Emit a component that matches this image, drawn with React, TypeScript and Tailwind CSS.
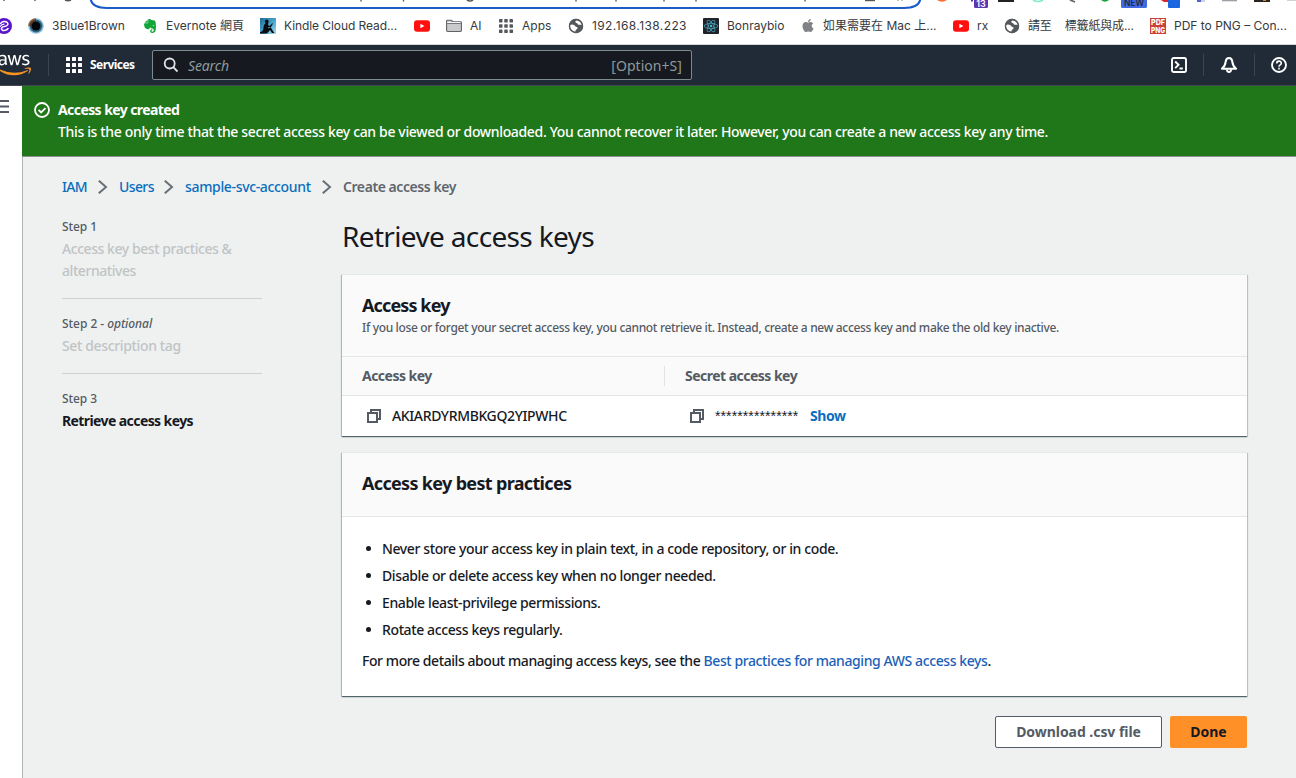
import type { ReactNode } from "react";
import { FaApple, FaAws, FaEvernote, FaReact } from "react-icons/fa";

function TopStrip() {
  return (
    <svg width="1296" height="10" viewBox="0 0 1296 10" className="block shrink-0" fontFamily="Inter, sans-serif">
      <path d="M90.5 -2 C91 4.5 97 8 107 8 H904 C914 8 920 4.5 920.5 -2" fill="none" stroke="#1a5bc8" strokeWidth="2" />
      <path d="M4 0v1M35 0v1" stroke="#555" strokeWidth="1.4" />
      <path d="M65 0q3 1.4 6 0" stroke="#555" strokeWidth="1.4" fill="none" />
      <path d="M361 0v1.4M403.500 0v1.4M576 0v1.4M616 0v1.4M664 0v1.4M696 0v1.4M805 0v1.4" stroke="#555" strokeWidth="1.3" />
      <path d="M467 0q3 2 6 0" stroke="#555" strokeWidth="1.6" fill="none" />
      <path d="M865 0.500h10" stroke="#555" strokeWidth="1.4" />
      <path d="M898 0v1M902 0v1" stroke="#888" strokeWidth="1" />
      <path d="M937 0q5 3.600 10 0z" fill="#ff6b2c" />
      <rect x="974" y="-4" width="14" height="12" rx="1.500" fill="#5e35b1" />
      <text x="981" y="6.500" fontSize="9" fontWeight="600" fill="#fff" textAnchor="middle">13</text>
      <rect x="971" y="0" width="2" height="1.500" fill="#5e35b1" />
      <rect x="998" y="0" width="16" height="2" fill="#222" />
      <path d="M1033 0q5 3 10 0" fill="none" stroke="#7eead0" strokeWidth="1.500" />
      <path d="M1070 0l5 2" stroke="#666" strokeWidth="1.800" />
      <path d="M1101 0q4 3.600 8 0z" fill="#13a53b" />
      <rect x="1121" y="-4" width="26" height="12" rx="1.500" fill="#4169e1" />
      <text x="1134" y="6.300" fontSize="8.500" fontWeight="500" fill="#1b2233" textAnchor="middle">NEW</text>
      <path d="M1161 0h7v2h-4z" fill="#e0202a" />
      <rect x="1168" y="-4" width="12" height="12" rx="1" fill="#1a66e0" />
      <rect x="1197" y="0" width="4" height="2" fill="#5560c8" />
      <rect x="1201" y="0" width="4" height="2" fill="#cfd3e6" />
      <rect x="1222" y="0" width="15" height="1.300" fill="#9aa0a6" />
      <rect x="1254" y="0" width="16" height="2" fill="#2a2320" />
      <rect x="1263" y="0" width="3" height="1" fill="#d48a2a" />
      <rect x="1287" y="0" width="9" height="1" fill="#d9cfd2" />
    </svg>
  );
}

function YouTube() {
  return (
    <svg width="16" height="16" viewBox="0 0 16 16">
      <rect x="0" y="2.200" width="16" height="11.600" rx="3" fill="#ff0f0f" />
      <path d="M6.400 5.700v4.600l4-2.300z" fill="#fff" />
    </svg>
  );
}

function Violet() {
  return (
    <svg width="16" height="16" viewBox="0 0 16 16">
      <circle cx="8" cy="8" r="8" fill="#5b16c9" />
      <path d="M4.500 5.500C6 3.300 9.500 2.700 11.300 4.600c1.300 1.600.2 3-1.500 3.500L7 8.900c-1.600.6-2 2-1 2.900 1.500 1.200 4.500.8 6-1.300" fill="none" stroke="#fff" strokeWidth="1.500" strokeLinecap="round" />
      <path d="M4.500 8.300Q5.500 6.300 8 6.200" fill="none" stroke="#fff" strokeWidth="1.200" strokeLinecap="round" />
    </svg>
  );
}

function Eye() {
  return (
    <svg width="16" height="16" viewBox="0 0 16 16">
      <circle cx="8" cy="8" r="7.800" fill="#8fc3dd" />
      <path d="M8 .2A7.800 7.800 0 0 0 .2 8H8z" fill="#9a6038" />
      <circle cx="8" cy="8" r="6.400" fill="#2d6482" />
      <path d="M8 1.600A6.400 6.400 0 0 0 1.600 8H8z" fill="#5c3a25" />
      <circle cx="8" cy="8" r="4.500" fill="#03060a" />
    </svg>
  );
}

function Kindle() {
  return (
    <svg width="16" height="16" viewBox="0 0 16 16">
      <defs>
        <linearGradient id="sky" x1="0" y1="0" x2="1" y2="1">
          <stop offset="0" stopColor="#1d6d96" />
          <stop offset=".55" stopColor="#49a8cf" />
          <stop offset="1" stopColor="#a6dcec" />
        </linearGradient>
      </defs>
      <rect width="16" height="16" fill="url(#sky)" />
      <path d="M0 14.300C2 13.500 3 12.500 3.400 11 3.300 8.500 4 6.300 5.700 5A1.900 1.900 0 1 1 8.300 4.600L8 7l1.800 1 2.400-2.700.7.500-2.200 3.700-2.200-.4L8 10.300l3-.6 2.600 4.400 1 .9H12l-2-2.900L7 15.500H0z" fill="#090d10" />
    </svg>
  );
}

function Folder() {
  return (
    <svg width="16" height="16" viewBox="0 0 16 16">
      <path d="M.6 12.600V3.200q0-.9.9-.9h4l1.300 1.500h7.700q.9 0 .9.900v7.900q0 .9-.9.900H1.500q-.9 0-.9-.9z" fill="#c9cacc" stroke="#5f6368" strokeWidth="1.100" />
      <path d="M1.200 5.400h13.600" stroke="#5f6368" strokeWidth=".9" />
      <path d="M1.200 4.500h13.300" stroke="#fff" strokeWidth=".9" />
    </svg>
  );
}

function Grid({ size, color }: { size: number; color: string }) {
  return (
    <svg width={size} height={size} viewBox="0 0 16 16" fill={color}>
      {[0, 6, 12].map((y) => [0, 6, 12].map((x) => <rect key={`${x}-${y}`} x={x} y={y} width="4" height="4" rx=".5" />))}
    </svg>
  );
}

function Globe() {
  return (
    <svg width="16" height="16" viewBox="0 0 16 16">
      <circle cx="8" cy="8" r="7.200" fill="#54585d" />
      <path d="M1.300 7.400C4 5.800 6.300 6.700 7.300 8.200c.5 1 2.200.4 2.300 1.800 0 1.500-1.700 1.200-2 2.600l-.4 1.300C3.800 13.600 1.500 10.800 1.300 7.400z" fill="#fff" />
      <path d="M8.600 2.200c-1.800 1-1.500 2.400-.2 2.700 1.300.2 1 1.500 2.200 1.900 1.300.3 1.800-.5 3.300.6C14 5 11.600 2.300 8.600 2.200z" fill="#fff" />
      <circle cx="8" cy="8" r="6.500" fill="none" stroke="#54585d" strokeWidth="1.400" />
    </svg>
  );
}

function PdfIcon() {
  return (
    <svg width="16" height="16" viewBox="0 0 16 16" fontFamily="Inter, sans-serif" fontWeight="800" fontSize="8" fill="#fff">
      <rect width="16" height="16" fill="#cc4036" />
      <text x="1" y="7.300" textLength="14" lengthAdjust="spacingAndGlyphs">PDF</text>
      <text x="1" y="14.600" textLength="14" lengthAdjust="spacingAndGlyphs">PNG</text>
    </svg>
  );
}

function Bookmark({ icon, children, className }: { icon: ReactNode; children?: ReactNode; className: string }) {
  return (
    <div className={`flex shrink-0 items-center gap-2 whitespace-pre ${className}`}>
      <span className="flex w-4 shrink-0 justify-center">{icon}</span>
      {children}
    </div>
  );
}

function Bookmarks() {
  return (
    <div className="flex h-[35px] shrink-0 items-center border-b border-[#d5d7da] bg-white pb-[2px] font-[Inter,'Noto_Sans_CJK_TC',sans-serif] text-[12px] text-[#36393d]">
      <Bookmark className="-ml-1 w-8" icon={<Violet />} />
      <Bookmark className="w-[114px]" icon={<Eye />}>3Blue1Brown</Bookmark>
      <Bookmark className="w-[118px]" icon={<FaEvernote size={16} color="#12a537" />}>Evernote 網頁</Bookmark>
      <Bookmark className="w-[154px] tracking-[-0.08px]" icon={<Kindle />}>Kindle Cloud Read...</Bookmark>
      <Bookmark className="w-8" icon={<YouTube />} />
      <Bookmark className="w-[52px]" icon={<Folder />}>AI</Bookmark>
      <Bookmark className="w-[70px]" icon={<Grid size={14} color="#54585d" />}>Apps</Bookmark>
      <Bookmark className="w-[135px] tracking-[0.4px]" icon={<Globe />}>192.168.138.223</Bookmark>
      <Bookmark className="w-24" icon={<span className="flex size-4 items-center justify-center rounded-[1px] bg-[#20232a]"><FaReact size={14} color="#4bb5d2" /></span>}>Bonraybio</Bookmark>
      <Bookmark className="w-[154px]" icon={<FaApple size={15} color="#808285" className="mb-px ml-[2px]" />}>如果需要在 Mac 上...</Bookmark>
      <Bookmark className="w-[51px]" icon={<YouTube />}>rx</Bookmark>
      <Bookmark className="w-[146px] tracking-[-0.14px]" icon={<Globe />}>請至    標籤紙與成...</Bookmark>
      <Bookmark className="w-[146px]" icon={<PdfIcon />}>PDF to PNG – Con...</Bookmark>
    </div>
  );
}

function Header() {
  return (
    <header className="flex h-[41px] shrink-0 items-center border-b border-[#414750] bg-[#212b37] text-white">
      <svg width="0" height="0" className="size-0">
        <defs>
          <linearGradient id="awsFill" x1="0" y1="0" x2="0" y2="1">
            <stop offset=".6" stopColor="#fff" />
            <stop offset=".6" stopColor="#f7931e" />
          </linearGradient>
        </defs>
      </svg>
      <FaAws fill="url(#awsFill)" className="-ml-[3px] h-[28px] w-[34px] shrink-0" />
      <span className="ml-[17px] h-[22px] w-px bg-[#3b4552]" />
      <div className="ml-[17px] flex w-[86px] items-center gap-2">
        <Grid size={16} color="#fff" />
        <span className="text-[12px] font-bold tracking-[-0.55px]">Services</span>
      </div>
      <div className="flex h-[30px] w-[540px] items-center rounded-[2px] border border-[#7c8c8d] bg-[#16191f] pr-[9px] pl-[10px] text-[14px] text-[#8d9b9c]">
        <svg width="16" height="16" viewBox="0 0 16 16" fill="none" stroke="#dfe3e6" strokeWidth="1.800">
          <circle cx="6.700" cy="6.500" r="5" />
          <path d="M10.300 10.200l4.200 4.300" />
        </svg>
        <span className="ml-[9px] tracking-[-0.15px] italic">Search</span>
        <span className="ml-auto tracking-[0.05px]">[Option+S]</span>
      </div>
      <div className="ml-[479px] flex shrink-0 items-center">
        <svg width="16" height="16" viewBox="0 0 16 16" fill="none" stroke="#fff" strokeWidth="1.900">
          <rect x="1" y="1" width="14" height="14" rx="1.800" />
          <path d="M4.200 4.500L7.500 7.800 4.200 11.200M8.500 11.500h3.300" />
        </svg>
        <span className="ml-4 h-[22px] w-px bg-[#3b4552]" />
        <svg width="18" height="18" viewBox="0 0 18 18" className="ml-4" fill="none" stroke="#fff" strokeWidth="2" strokeLinejoin="round">
          <path d="M9 2C7 2 5.900 3.400 5.700 5.600 5.400 9 4 11 1.900 12.700h14.200C14 11 12.600 9 12.300 5.600 12.100 3.400 11 2 9 2z" />
          <path d="M6.900 13.500c.2 3.400 4 3.400 4.200 0" />
        </svg>
        <span className="ml-4 h-[22px] w-px bg-[#3b4552]" />
        <svg width="16" height="16" viewBox="0 0 16 16" className="ml-4" fill="none" stroke="#fff" strokeWidth="1.900">
          <circle cx="8" cy="8" r="7" />
          <path d="M5.700 6.500C5.700 3.400 10.300 3.400 10.300 6.200 10.300 8 8 7.700 8 9.700M8 10.700v1.700" strokeWidth="1.600" />
        </svg>
      </div>
    </header>
  );
}

function Chevron() {
  return (
    <svg width="10" height="14" viewBox="0 0 10 14" fill="none" stroke="#687078" strokeWidth="2">
      <path d="M.8 .7L8 7l-7.200 6.300" />
    </svg>
  );
}

function CopyIcon() {
  return (
    <svg width="14" height="14" viewBox="0 0 14 14" fill="none" stroke="#545b64" strokeWidth="2">
      <path d="M1 4h9v9H1z" />
      <path d="M4 4V1h9v9h-3" />
    </svg>
  );
}

const CARD = "border-t border-[#e4e8e8] bg-white shadow-[0_1px_1px_0_rgba(0,28,36,0.5),1px_1px_1px_0_rgba(0,28,36,0.15),-1px_1px_1px_0_rgba(0,28,36,0.2)]";

function Steps() {
  return (
    <nav className="w-[200px] shrink-0 text-[14px] leading-[22px] font-medium tracking-[-0.44px] text-[#c0c4c5]">
      <div className="border-b border-[#cdd1d2] pb-4">
        <div className="mb-[3px] pt-px text-[12px] leading-4 tracking-[-0.1px] text-[#545b64]">Step 1</div>
        Access key best practices &amp; alternatives
      </div>
      <div className="border-b border-[#cdd1d2] py-4">
        <div className="mb-[3px] pt-px text-[12px] leading-4 tracking-[-0.05px] text-[#545b64]">Step 2 - <i>optional</i></div>
        <span className="tracking-[-0.36px]">Set description tag</span>
      </div>
      <div className="pt-4">
        <div className="mb-[3px] pt-px text-[12px] leading-4 tracking-[-0.1px] text-[#545b64]">Step 3</div>
        <div className="font-bold tracking-[-0.59px] text-[#16191f]">Retrieve access keys</div>
      </div>
    </nav>
  );
}

const TIPS = [
  "Never store your access key in plain text, in a code repository, or in code.",
  "Disable or delete access key when no longer needed.",
  "Enable least-privilege permissions.",
  "Rotate access keys regularly.",
];

export default function App() {
  return (
    <div className="flex h-[778px] w-[1296px] flex-col overflow-hidden bg-white font-['Noto_Sans',sans-serif]">
      <TopStrip />
      <Bookmarks />
      <Header />
      <div className="flex min-h-0 flex-1">
        <div className="w-[22px] shrink-0 pt-[14px]">
          <svg width="9" height="13" viewBox="0 0 9 13" stroke="#545b64" strokeWidth="2">
            <path d="M0 1h9M0 6.500h9M0 12h9" />
          </svg>
        </div>
        <main className="flex min-w-0 flex-1 flex-col border-l border-[#b0b4b6] bg-[#eff1f1] text-[14px] leading-[22px] font-medium text-[#16191f]">
          <div className="-ml-px flex h-[71px] shrink-0 gap-2 border-b border-[#8a8f90] bg-[#20771a] pt-[13px] pl-3 text-white">
            <svg width="16" height="16" viewBox="0 0 16 16" className="mt-[3px] shrink-0" fill="none" stroke="#fff" strokeWidth="1.800">
              <circle cx="8" cy="8" r="7" />
              <path d="M4.600 7.900l2.500 2.500 4.400-4.300" />
            </svg>
            <div className="whitespace-nowrap">
              <div className="font-bold tracking-[-0.58px]">Access key created</div>
              <div className="tracking-[-0.347px]">This is the only time that the secret access key can be viewed or downloaded. You cannot recover it later. However, you can create a new access key any time.</div>
            </div>
          </div>
          <div className="mt-[19px] ml-[39px] flex h-[22px] items-center whitespace-nowrap text-[#0a6ebd]">
            <span className="w-[36px] tracking-[-0.7px]">IAM</span>
            <Chevron />
            <span className="ml-[11px] w-[45px] tracking-[-0.6px]">Users</span>
            <Chevron />
            <span className="ml-[11px] w-[137px] tracking-[-0.34px]">sample-svc-account</span>
            <Chevron />
            <span className="ml-[11px] font-semibold tracking-[-0.43px] text-[#5f666d]">Create access key</span>
          </div>
          <div className="mt-5 ml-[39px] flex gap-20">
            <Steps />
            <div className="w-[905px]">
              <h1 className="text-[28px] leading-[36px] font-normal tracking-[-0.65px]">Retrieve access keys</h1>
              <section className={`mt-5 ${CARD}`}>
                <div className="h-[82px] border-b border-[#e4e7e8] bg-[#fafafa] px-5 pt-[19px]">
                  <h2 className="text-[18px] leading-[22px] font-bold tracking-[-0.88px]">Access key</h2>
                  <p className="mt-1 text-[12px] leading-4 tracking-[-0.336px] whitespace-nowrap text-[#545b64]">If you lose or forget your secret access key, you cannot retrieve it. Instead, create a new access key and make the old key inactive.</p>
                </div>
                <div className="flex h-[39px] items-center border-b border-[#e4e7e8] bg-[#fafafa] font-bold tracking-[-0.52px] text-[#545b64]">
                  <div className="flex h-5 w-[323px] items-center border-r border-[#e0e4e5] pl-5">Access key</div>
                  <div className="pl-5">Secret access key</div>
                </div>
                <div className="flex h-[40px] items-center">
                  <div className="flex w-[323px] items-center gap-[11px] pl-[25px] tracking-[-0.37px]"><CopyIcon />AKIARDYRMBKGQ2YIPWHC</div>
                  <div className="flex items-center pl-[25px]">
                    <CopyIcon />
                    <span className="ml-[11px] w-[95px] font-['Liberation_Sans',sans-serif] tracking-[0.11px]">***************</span>
                    <span className="font-bold tracking-[-0.4px] text-[#0a6ebd]">Show</span>
                  </div>
                </div>
              </section>
              <section className={`mt-4 h-[244px] ${CARD}`}>
                <div className="h-[64px] border-b border-[#e4e7e8] bg-[#fafafa] px-5 pt-[19px]">
                  <h2 className="text-[18px] leading-[22px] font-bold tracking-[-0.67px]">Access key best practices</h2>
                </div>
                <ul className="mt-[18px] px-5">
                  {TIPS.map((t) => (
                    <li key={t} className="flex h-[27px] items-center pl-[4px] tracking-[-0.385px]">
                      <span className="mr-[11px] size-[5px] rounded-full bg-[#16191f]" />
                      {t}
                    </li>
                  ))}
                </ul>
                <p className="mt-[7px] px-5 tracking-[-0.424px]">
                  For more details about managing access keys, see the <span className="tracking-[-0.404px] text-[#1b5fb8]">Best practices for managing AWS access keys</span>.
                </p>
              </section>
              <div className="mt-5 flex justify-end gap-2 font-bold">
                <button className="h-8 w-[167px] rounded-[2px] border border-[#545b64] bg-white tracking-[-0.05px] text-[#545b64]">Download .csv file</button>
                <button className="h-8 w-[77px] rounded-[2px] bg-[#ff9028]">Done</button>
              </div>
            </div>
          </div>
        </main>
      </div>
    </div>
  );
}
